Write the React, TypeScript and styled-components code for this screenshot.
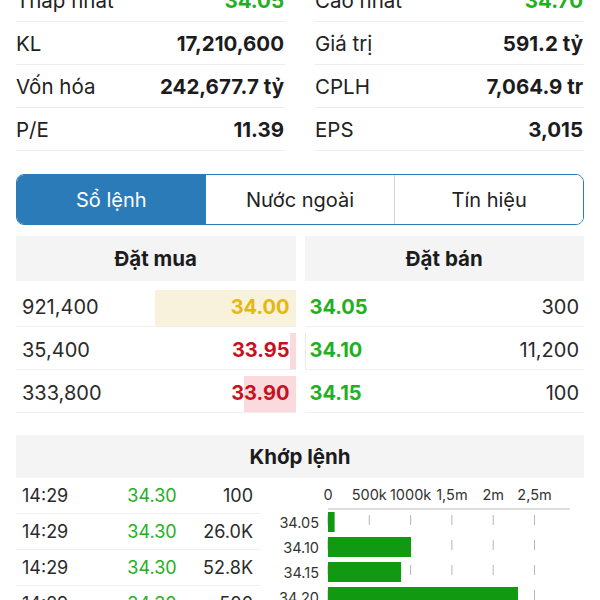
import React from "react";
import styled, { createGlobalStyle } from "styled-components";

const GlobalStyle = createGlobalStyle`
  body {
    margin: 0;
    background: #fff;
    font-family: Inter, "Noto Sans", sans-serif;
    color: #1c1c1e;
  }
`

const Page = styled.div`
  margin-top: -21px;
  padding: 0 16px;
  display: flex;
  flex-direction: column;
`

const StatsGrid = styled.div`
  display: grid;
  grid-template-columns: 1fr 1fr;
  column-gap: 30px;
`

const StatColumn = styled.div`
  display: flex;
  flex-direction: column;
`

const StatRow = styled.div`
  height: 42px;
  display: flex;
  justify-content: space-between;
  align-items: center;
  border-bottom: 1px solid #ededed;
  font-size: 20.5px;
  padding-right: 1px;
`

const StatLabel = styled.span`
  color: #222;
`

const StatValue = styled.span<{ $color?: string }>`
  font-weight: 700;
  color: ${(p) => p.$color || "#1c1c1e"};
`

const Tabs = styled.div`
  margin-top: 23px;
  height: 49px;
  display: grid;
  grid-template-columns: repeat(3, 1fr);
  border: 1.5px solid #2b7bb9;
  border-radius: 8px;
  overflow: hidden;
`

const Tab = styled.div<{ $active?: boolean }>`
  display: flex;
  align-items: center;
  justify-content: center;
  font-size: 20px;
  color: ${(p) => (p.$active ? "#fff" : "#222")};
  background: ${(p) => (p.$active ? "#2b7bb9" : "#fff")};
  & + & {
    border-left: ${(p) => (p.$active ? "none" : "1px solid #d4d4d4")};
  }
  &:nth-child(2) {
    border-left: none;
  }
`

const BookGrid = styled.div`
  margin-top: 11px;
  display: grid;
  grid-template-columns: 1fr 1fr;
  column-gap: 9px;
`

const BookSide = styled.div`
  display: flex;
  flex-direction: column;
`

const SectionHeader = styled.div`
  height: 45px;
  background: #f4f4f4;
  display: flex;
  align-items: center;
  justify-content: center;
  font-size: 20.5px;
  font-weight: 700;
  color: #1c1c1e;
`

const BookRows = styled.div`
  margin-top: 3px;
  display: flex;
  flex-direction: column;
`

const BookRow = styled.div<{ $side: "buy" | "sell" }>`
  position: relative;
  height: 42px;
  display: flex;
  justify-content: space-between;
  align-items: center;
  border-bottom: 1px solid #efefef;
  font-size: 20px;
  padding: ${(p) => (p.$side === "buy" ? "4px 6px 0 6px" : "4px 5px 0 5px")};
  box-sizing: content-box;
  height: 38px;
`

const VolBar = styled.div<{ $side: "buy" | "sell"; $bg: string }>`
  position: absolute;
  bottom: 0;
  height: 36px;
  background: ${(p) => p.$bg};
  ${(p) => (p.$side === "buy" ? "right: 0;" : "left: 0;")}
`

const Vol = styled.span`
  position: relative;
  color: #2a2a2a;
`

const Price = styled.span<{ $color: string }>`
  position: relative;
  font-weight: 700;
  color: ${(p) => p.$color};
`

const MatchHeader = styled(SectionHeader)`
  margin-top: 22px;
  height: 43px;
`

const MatchArea = styled.div`
  display: grid;
  grid-template-columns: 244px 1fr;
  column-gap: 10px;
`

const MatchTable = styled.div`
  display: flex;
  flex-direction: column;
`

const MatchRow = styled.div`
  height: 35px;
  display: grid;
  grid-template-columns: 80px 100px 1fr;
  align-items: center;
  border-bottom: 1px solid #efefef;
  font-size: 18px;
  padding: 0 7px 0 6px;
`

const MatchTime = styled.span`
  color: #2a2a2a;
`

const MatchPrice = styled.span`
  color: #22b022;
  text-align: center;
`

const MatchVol = styled.span`
  color: #2a2a2a;
  text-align: right;
`

const ChartBox = styled.div`
  display: flex;
  margin-top: -2px;
`

const GREEN = "#22b022";
const RED = "#c8111e";
const YELLOW = "#e6b70f";

const leftStats = [
  { label: "Thấp nhất", value: "34.05", color: GREEN },
  { label: "KL", value: "17,210,600" },
  { label: "Vốn hóa", value: "242,677.7 tỷ" },
  { label: "P/E", value: "11.39" },
];
const rightStats = [
  { label: "Cao nhất", value: "34.70", color: GREEN },
  { label: "Giá trị", value: "591.2 tỷ" },
  { label: "CPLH", value: "7,064.9 tr" },
  { label: "EPS", value: "3,015" },
];

const buyOrders = [
  { vol: 921400, price: "34.00", color: YELLOW, bg: "#f8f2dd" },
  { vol: 35400, price: "33.95", color: RED, bg: "#fadadd" },
  { vol: 333800, price: "33.90", color: RED, bg: "#fadadd" },
];
const sellOrders = [
  { vol: 300, price: "34.05" },
  { vol: 11200, price: "34.10" },
  { vol: 100, price: "34.15" },
];
const MAX_VOL = 921400;
const MAX_BAR = 141;

const matches = [
  { time: "14:29", price: "34.30", vol: "100" },
  { time: "14:29", price: "34.30", vol: "26.0K" },
  { time: "14:29", price: "34.30", vol: "52.8K" },
  { time: "14:29", price: "34.30", vol: "500" },
];

const chartBars = [
  { label: "34.05", value: 80000 },
  { label: "34.10", value: 1005000 },
  { label: "34.15", value: 885000 },
  { label: "34.20", value: 2300000 },
];
const ticks = ["0", "500k", "1000k", "1,5m", "2m", "2,5m"];

const VolumeChart: React.FC = () => {
  const x0 = 58;
  const step = 41.3;
  const px = (v: number) => (v / 500000) * step;
  return (
    <svg width="320" height="132" viewBox="0 0 320 132">
      {ticks.map((t, i) => (
        <text
          key={t}
          x={x0 + i * step}
          y={24}
          textAnchor="middle"
          fontSize="14.5"
          fontFamily="Inter, sans-serif"
          fill="#333"
        >
          {t}
        </text>
      ))}
      <line x1={x0} y1={33} x2={300} y2={33} stroke="#bbb" strokeWidth="1" />
      {ticks.map((t, i) => (
        <line
          key={"g" + t}
          x1={x0 + i * step}
          y1={39}
          x2={x0 + i * step}
          y2={132}
          stroke="#b5b5b5"
          strokeWidth="1"
          strokeDasharray="10 15"
        />
      ))}
      {chartBars.map((b, i) => (
        <g key={b.label}>
          <text
            x={49}
            y={36 + i * 25 + 15.5}
            textAnchor="end"
            fontSize="14.5"
            fontFamily="Inter, sans-serif"
            fill="#333"
          >
            {b.label}
          </text>
          <rect x={x0} y={36 + i * 25} width={px(b.value)} height={20} fill="#119a11" />
        </g>
      ))}
    </svg>
  );
};

const App: React.FC = () => {
  return (
    <>
      <GlobalStyle />
      <Page>
        <StatsGrid>
          {[leftStats, rightStats].map((col, ci) => (
            <StatColumn key={ci}>
              {col.map((s) => (
                <StatRow key={s.label}>
                  <StatLabel>{s.label}</StatLabel>
                  <StatValue $color={s.color}>{s.value}</StatValue>
                </StatRow>
              ))}
            </StatColumn>
          ))}
        </StatsGrid>

        <Tabs>
          <Tab $active>Sổ lệnh</Tab>
          <Tab>Nước ngoài</Tab>
          <Tab>Tín hiệu</Tab>
        </Tabs>

        <BookGrid>
          <BookSide>
            <SectionHeader>Đặt mua</SectionHeader>
            <BookRows>
              {buyOrders.map((o) => (
                <BookRow $side="buy" key={o.price}>
                  <VolBar
                    $side="buy"
                    $bg={o.bg}
                    style={{ width: Math.max(2, (o.vol / MAX_VOL) * MAX_BAR) }}
                  />
                  <Vol>{o.vol.toLocaleString("en-US")}</Vol>
                  <Price $color={o.color}>{o.price}</Price>
                </BookRow>
              ))}
            </BookRows>
          </BookSide>
          <BookSide>
            <SectionHeader>Đặt bán</SectionHeader>
            <BookRows>
              {sellOrders.map((o) => (
                <BookRow $side="sell" key={o.price}>
                  <VolBar
                    $side="sell"
                    $bg="#dff3df"
                    style={{ width: (o.vol / MAX_VOL) * MAX_BAR }}
                  />
                  <Price $color={GREEN}>{o.price}</Price>
                  <Vol>{o.vol.toLocaleString("en-US")}</Vol>
                </BookRow>
              ))}
            </BookRows>
          </BookSide>
        </BookGrid>

        <MatchHeader>Khớp lệnh</MatchHeader>
        <MatchArea>
          <MatchTable>
            {matches.map((m, i) => (
              <MatchRow key={i}>
                <MatchTime>{m.time}</MatchTime>
                <MatchPrice>{m.price}</MatchPrice>
                <MatchVol>{m.vol}</MatchVol>
              </MatchRow>
            ))}
          </MatchTable>
          <ChartBox>
            <VolumeChart />
          </ChartBox>
        </MatchArea>
      </Page>
    </>
  );
};

export default App;
